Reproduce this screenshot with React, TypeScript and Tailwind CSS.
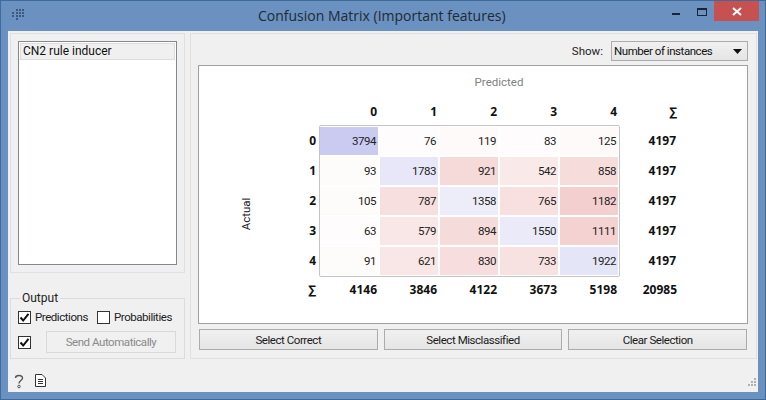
import React from 'react';

const total = 4197;
const matrix = [
  [3794, 76, 119, 83, 125],
  [93, 1783, 921, 542, 858],
  [105, 787, 1358, 765, 1182],
  [63, 579, 894, 1550, 1111],
  [91, 621, 830, 733, 1922],
];
const colSums = [4146, 3846, 4122, 3673, 5198, 20985];

// diagonal goes blue, the rest red, both scaled by share of the row
const cellColor = (value: number, diagonal: boolean) => {
  const p = value / total;
  if (diagonal) {
    const c = Math.round(255 - 57 * p);
    return `rgb(${c},${c},${Math.round(255 - 15 * p)})`;
  }
  const c = Math.round(255 - 171 * p);
  return `rgb(${Math.round(255 - 40 * p)},${c},${c})`;
};

const boldFont = { fontFamily: '"Open Sans", sans-serif' };

const CheckBox = ({ checked }: { checked: boolean }) => (
  <span className="flex h-[13px] w-[13px] shrink-0 items-center justify-center border border-[#333333] bg-white">
    {checked && (
      <svg width="11" height="11" viewBox="0 0 11 11">
        <path d="M1.5 5.5 L4.2 8.5 L9.5 1.8" fill="none" stroke="#111111" strokeWidth="2" />
      </svg>
    )}
  </span>
);

const PushButton = ({ label }: { label: string }) => (
  <button className="h-[21px] flex-1 border border-[#acacac] bg-gradient-to-b from-[#f0f0f0] to-[#e5e5e5] text-[#1a1a1a]">
    {label}
  </button>
);

const HeaderCell = ({ children }: { children: React.ReactNode }) => (
  <div className="w-[60px] pr-[3px] text-right text-[12px] font-bold tracking-normal text-[#111111]" style={boldFont}>
    {children}
  </div>
);

export default function App() {
  return (
    <div
      className="flex h-[400px] w-[766px] flex-col overflow-hidden border border-[#3f6a9c] bg-[#6a91bf] text-[11.5px] leading-[16px] tracking-[-0.45px] text-[#222222]"
      style={{ fontFamily: 'Roboto, sans-serif' }}
    >
      {/* title bar */}
      <div className="flex h-[30px] shrink-0 items-start tracking-normal" style={boldFont}>
        <div className="ml-[11px] mt-[8px] w-[14px]">
          <svg width="13" height="11" viewBox="0 0 13 11">
            <g fill="#3c5a80">
              <rect x="4" y="0" width="2" height="2" />
              <rect x="7" y="0" width="2" height="2" />
              <rect x="10" y="0" width="2" height="2" />
              <rect x="0" y="3" width="2" height="2" />
              <rect x="4" y="3" width="2" height="2" />
              <rect x="7" y="3" width="2" height="2" />
              <rect x="10" y="3" width="2" height="2" />
              <rect x="0" y="6" width="2" height="2" />
              <rect x="4" y="6" width="2" height="2" />
              <rect x="7" y="6" width="2" height="2" />
              <rect x="10" y="6" width="2" height="2" />
              <rect x="4" y="9" width="2" height="2" />
            </g>
          </svg>
        </div>
        <div className="ml-[232px] mt-[5px] w-[249px] whitespace-nowrap text-[14px] leading-[20px] text-[#1f2a36]">
          Confusion Matrix (Important features)
        </div>
        <div className="ml-auto mr-[6px] flex items-start">
          <div className="flex h-[19px] w-[26px] items-start justify-center pt-[12px]">
            <div className="h-[2px] w-[8px] bg-[#1b2430]" />
          </div>
          <div className="flex h-[19px] w-[26px] items-start justify-center pt-[7px]">
            <div className="h-[8px] w-[10px] border border-t-2 border-[#1b2430]" />
          </div>
          <div className="ml-[-1px] flex h-[20px] w-[45px] items-center justify-center bg-[#c75050]">
            <svg width="10" height="9" viewBox="0 0 10 9">
              <path d="M1 1 L9 8 M9 1 L1 8" stroke="#ffffff" strokeWidth="2" />
            </svg>
          </div>
        </div>
      </div>

      {/* window body */}
      <div className="ml-[7px] mr-[7px] flex h-[361px] flex-col bg-[#f0f0f0] pl-[2px] pr-[1px] pt-[2px]">
        <div className="flex h-[326px] gap-[5px]">
          <div className="flex w-[175px] shrink-0 flex-col justify-between">
            <div className="h-[240px] border border-[#e0e0e0] px-[7px] py-[7px]">
              <div className="h-full border border-[#828790] bg-white p-[1px]">
                <div className="h-[17px] border border-[#dddddd] bg-[#f0f0f0] pl-[2px] text-[12px] leading-[15px] tracking-normal text-[#111111]">
                  CN2 rule inducer
                </div>
              </div>
            </div>
            <fieldset className="h-[68px] border border-[#dcdcdc] px-[7px]">
              <legend className="ml-[2px] px-[2px] text-[12px] leading-[14px] tracking-normal text-[#222222]">Output</legend>
              <div className="mt-[4px] flex items-center">
                <CheckBox checked />
                <span className="ml-[4px] w-[62px] whitespace-nowrap">Predictions</span>
                <CheckBox checked={false} />
                <span className="ml-[4px] whitespace-nowrap">Probabilities</span>
              </div>
              <div className="mt-[6px] flex items-center">
                <CheckBox checked />
                <div className="ml-[15px] flex h-[22px] w-[130px] items-center justify-center border border-[#d9d9d9] text-[#8a8a8a]">
                  Send Automatically
                </div>
              </div>
            </fieldset>
          </div>

          <div className="flex flex-1 flex-col border border-[#e0e0e0] pl-[7px] pr-[8px] pt-[7px]">
            <div className="flex h-[20px] items-center justify-end">
              <span className="mr-[8px] tracking-normal">Show:</span>
              <div className="flex h-[20px] w-[137px] items-center justify-between border border-[#acacac] bg-gradient-to-b from-[#f0f0f0] to-[#e5e5e5] pl-[2px] pr-[5px] text-[#111111]">
                <span>Number of instances</span>
                <svg width="9" height="5" viewBox="0 0 9 5">
                  <path d="M0 0 H9 L4.5 5 Z" fill="#111111" />
                </svg>
              </div>
            </div>

            <div className="mt-[4px] h-[259px] border border-[#a0a0a0] bg-white">
              <div className="ml-[120px] mt-[8px] w-[360px] text-center tracking-normal text-[#7f7f7f]">Predicted</div>

              <div className="ml-[121px] mt-[14px] flex h-[16px]">
                {[0, 1, 2, 3, 4].map((c) => (
                  <HeaderCell key={c}>{c}</HeaderCell>
                ))}
                <HeaderCell>∑</HeaderCell>
              </div>

              <div className="mt-[5px] flex">
                <div className="flex w-[64px] items-center justify-end pt-[26px]">
                  <span className="-rotate-90 whitespace-nowrap tracking-normal text-[#222222]">Actual</span>
                </div>
                <div className="flex w-[56px] flex-col pt-[2px]">
                  {[0, 1, 2, 3, 4].map((r) => (
                    <div
                      key={r}
                      className="flex h-[30px] items-center justify-end pb-[2px] pr-[3px] text-[12px] font-bold tracking-normal text-[#111111]"
                      style={boldFont}
                    >
                      {r}
                    </div>
                  ))}
                </div>
                <div className="grid h-[152px] w-[301px] grid-cols-[repeat(5,58px)] grid-rows-[repeat(5,28px)] gap-[2px] rounded-[2px] border border-[#c4c4c4] pt-[1px]">
                  {matrix.map((row, r) =>
                    row.map((value, c) => (
                      <div
                        key={`${r}-${c}`}
                        className="flex items-center justify-end pr-[2px] text-[#222222]"
                        style={{ backgroundColor: cellColor(value, r === c) }}
                      >
                        {value}
                      </div>
                    )),
                  )}
                </div>
                <div className="flex flex-col pt-[2px]">
                  {matrix.map((_, r) => (
                    <div
                      key={r}
                      className="flex h-[30px] w-[56px] items-center justify-end pb-[2px] text-[12px] font-bold tracking-normal text-[#111111]"
                      style={boldFont}
                    >
                      {total}
                    </div>
                  ))}
                </div>
              </div>

              <div className="mt-[5px] flex h-[16px]">
                <div className="w-[120px] pr-[3px] text-right text-[12px] font-bold tracking-normal text-[#111111]" style={boldFont}>
                  ∑
                </div>
                <div className="flex pl-[1px]">
                  {colSums.map((value) => (
                    <HeaderCell key={value}>{value}</HeaderCell>
                  ))}
                </div>
              </div>
            </div>

            <div className="mt-[5px] flex gap-[6px] px-[1px]">
              <PushButton label="Select Correct" />
              <PushButton label="Select Misclassified" />
              <PushButton label="Clear Selection" />
            </div>
          </div>
        </div>

        {/* footer */}
        <div className="flex flex-1 items-start pl-[3px] pt-[15px]">
          <svg width="12" height="15" viewBox="0 0 12 15">
            <path d="M2.5 4 C2.5 1 9.5 0.5 9.5 4 C9.5 6.5 6 6.5 6 9.5" fill="none" stroke="#555555" strokeWidth="1.4" />
            <circle cx="6" cy="12.5" r="1.3" fill="none" stroke="#555555" />
          </svg>
          <svg className="ml-[10px]" width="11" height="13" viewBox="0 0 11 13">
            <path d="M0.5 0.5 H7 L10.5 4 V12.5 H0.5 Z" fill="#ffffff" stroke="#333333" />
            <path d="M3 5.5 H8 M3 7.5 H8 M3 9.5 H8" stroke="#333333" />
          </svg>
          <svg className="ml-auto mt-[4px]" width="10" height="10" viewBox="0 0 10 10">
            <g fill="#b0b0b0">
              <rect x="7" y="0" width="2" height="2" />
              <rect x="4" y="3" width="2" height="2" />
              <rect x="7" y="3" width="2" height="2" />
              <rect x="1" y="6" width="2" height="2" />
              <rect x="4" y="6" width="2" height="2" />
              <rect x="7" y="6" width="2" height="2" />
            </g>
          </svg>
        </div>
      </div>
    </div>
  );
}
